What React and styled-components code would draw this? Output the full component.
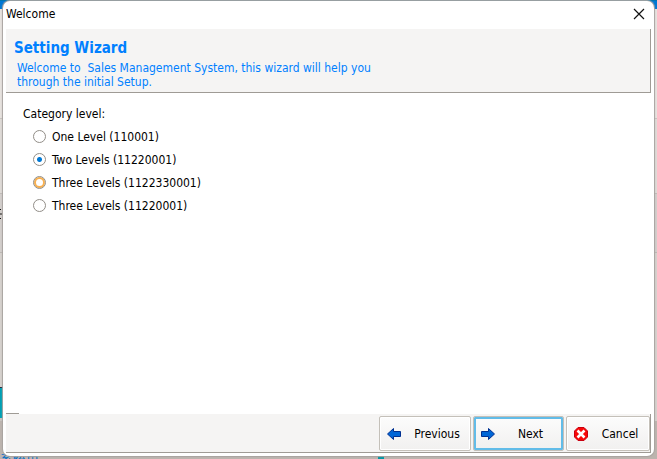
import { useState } from "react";
import styled, { createGlobalStyle } from "styled-components";

const GlobalStyle = createGlobalStyle`
  * {
    box-sizing: border-box;
  }
  body {
    margin: 0;
    font-family: "DejaVu Sans Condensed", "Noto Sans", "Noto Sans CJK SC", sans-serif;
    font-size: 12px;
    line-height: 14px;
    color: #000;
  }
  button,
  input {
    font: inherit;
    color: inherit;
  }
`;

const SDesktop = styled.div`
  position: relative;
  display: flex;
  min-height: 100vh;
  padding: 1px 3px 3px;
  overflow: hidden;
  background:
    linear-gradient(
        transparent 387px,
        #262a40 387px 388px,
        #00a0b4 388px 418px,
        #c8c4c0 418px 421px,
        transparent 421px
      )
      left / 3px 100% no-repeat,
    linear-gradient(
      #0074b0 0 1px,
      #0078d4 1px 9px,
      #e6e2de 9px 118px,
      #c8c4c0 118px 119px,
      #dedad6 119px 193px,
      #c0bcb8 193px 194px,
      #d2cecb 194px 252px,
      #bcb8b4 252px 253px,
      #d5d1cd 253px 421px,
      #bcb4ae 421px
    );
`;

const SBehindText = styled.span`
  position: absolute;
  left: 0;
  bottom: -8px;
  font-size: 13px;
  color: #0070c8;
`;

const SBehindMark = styled.svg`
  position: absolute;
  left: 0;
  top: 208px;
`;

const SBehindTile = styled.span`
  position: absolute;
  left: 378px;
  bottom: 0;
  width: 6px;
  height: 3px;
  background: #0097a5;
`;

const SWindow = styled.section`
  position: relative;
  flex: 1;
  display: flex;
  flex-direction: column;
  padding: 0 3px 3px;
  background: #fff;
  border-radius: 7px;
  box-shadow: 0 0 1px 1px #a8a4a0;
`;

const STitleBar = styled.header`
  display: flex;
  justify-content: space-between;
  align-items: center;
  height: 25px;
`;

const STitle = styled.h1`
  margin: 0;
  font-size: 12px;
  font-weight: 400;
`;

const SCloseButton = styled.button`
  display: flex;
  padding: 6px;
  border: none;
  background: transparent;
`;

const SBanner = styled.div`
  height: 64px;
  margin-top: 3px;
  padding: 11px 8px 0;
  color: #0080ff;
  background: #f5f4f3;
  border: solid #9f9b95;
  border-width: 0 1px 1px 0;

  h2 {
    margin: 0;
    font-size: 15px;
    font-weight: 700;
    line-height: 16px;
  }
  p {
    max-width: 400px;
    margin: 5px 0 0 3px;
  }
`;

const SOptions = styled.fieldset`
  flex: 1;
  display: flex;
  flex-direction: column;
  margin: 0;
  padding: 12px 17px;
  border: none;

  legend {
    float: left;
    padding: 0;
    margin-bottom: 2px;
    line-height: 18px;
  }
`;

const SOption = styled.label`
  display: flex;
  align-items: center;
  gap: 6px;
  height: 23px;
  margin-left: 10px;
`;

const SRadio = styled.input`
  appearance: none;
  width: 13px;
  height: 13px;
  margin: 0;
  border: 1px solid #928e88;
  border-radius: 50%;
  background: #fff;
  box-shadow: ${({ $hot }) => ($hot ? "inset 0 0 0 2px #f8b050" : "none")};

  &:checked {
    background: radial-gradient(#0078d4 0 2px, #fff 3px);
  }
`;

const SRule = styled.div`
  width: 13px;
  height: 1px;
  background: #9f9b95;
`;

const SFooter = styled.footer`
  display: flex;
  justify-content: flex-end;
  gap: 2px;
  height: 39px;
  padding-top: 2px;
  background: #f5f4f3;
  border: solid #9f9b95;
  border-width: 0 1px 1px 0;
`;

const SButton = styled.button`
  display: flex;
  align-items: center;
  gap: 8px;
  width: ${({ $width }) => $width}px;
  height: 35px;
  padding: 0 6px;
  background: linear-gradient(#fcfcfc, #f1f0ef);
  border: 1px solid #c4c0b9;
  border-radius: 2px;
  box-shadow: ${({ $primary }) =>
    $primary ? "inset 0 0 0 2px #62bce8" : "inset 0 0 0 1px #fff"};

  span {
    flex: 1;
    text-align: center;
  }
`;

const Arrow = ({ flip }) => (
  <svg width="16" height="16" viewBox="0 0 16 16" aria-hidden="true">
    <path
      d="M1.5 8 7.5 2.5V5.5H14.5V10.5H7.5V13.5Z"
      transform={flip ? "matrix(-1 0 0 1 16 0)" : undefined}
      fill="#0066d6"
      stroke="#003090"
    />
  </svg>
);

const CancelIcon = () => (
  <svg width="16" height="16" viewBox="0 0 16 16" aria-hidden="true">
    <path d="M5 1.5H11L14.5 5V11L11 14.5H5L1.5 11V5Z" fill="#f80808" stroke="#c80010" />
    <path d="M4.5 4.5 11.5 11.5M11.5 4.5 4.5 11.5" stroke="#fff" strokeWidth="2.6" />
  </svg>
);

const levels = [
  { id: "one", text: "One Level (110001)" },
  { id: "two", text: "Two Levels (11220001)" },
  { id: "three", text: "Three Levels (1122330001)", hot: true },
  { id: "three-short", text: "Three Levels (11220001)" },
];

const App = () => {
  const [level, setLevel] = useState("two");

  return (
    <>
      <GlobalStyle />
      <SDesktop>
        <SBehindMark width="2" height="12" aria-hidden="true">
          <path d="M0 1.5H1M0 6H2M0 10.5H1" stroke="#111" />
        </SBehindMark>
        <SBehindText>系统里</SBehindText>
        <SBehindTile />
        <SWindow>
          <STitleBar>
            <STitle>Welcome</STitle>
            <SCloseButton aria-label="Close">
              <svg width="12" height="12" viewBox="0 0 12 12">
                <path d="M1 1 11 11M11 1 1 11" stroke="#111" strokeWidth="1.2" />
              </svg>
            </SCloseButton>
          </STitleBar>
          <SBanner>
            <h2>Setting Wizard</h2>
            <p>
              Welcome to&nbsp; Sales Management System, this wizard will help you
              <br />
              through the initial Setup.
            </p>
          </SBanner>
          <SOptions>
            <legend>Category level:</legend>
            {levels.map(({ id, text, hot }) => (
              <SOption key={id}>
                <SRadio
                  type="radio"
                  name="level"
                  $hot={hot}
                  checked={level === id}
                  onChange={() => setLevel(id)}
                />
                {text}
              </SOption>
            ))}
          </SOptions>
          <SRule />
          <SFooter>
            <SButton $width={92}>
              <Arrow />
              <span>Previous</span>
            </SButton>
            <SButton $width={91} $primary>
              <Arrow flip />
              <span>Next</span>
            </SButton>
            <SButton $width={84}>
              <CancelIcon />
              <span>Cancel</span>
            </SButton>
          </SFooter>
        </SWindow>
      </SDesktop>
    </>
  );
};

export default App;
